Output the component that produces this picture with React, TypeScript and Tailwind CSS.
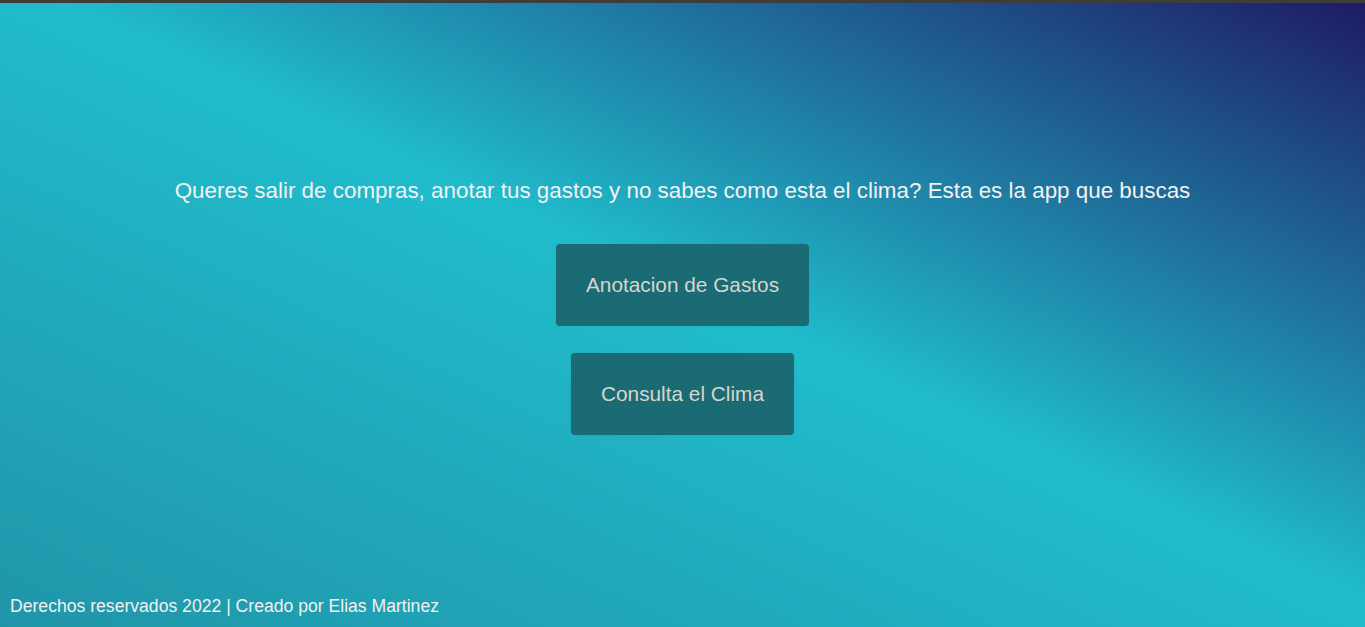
import React from "react";

const links = [
  { label: "Anotacion de Gastos" },
  { label: "Consulta el Clima" },
];

export default function App() {
  return (
    <div className="flex min-h-screen flex-col bg-[linear-gradient(to_top_right,#2095a9_0%,#20bccc_52%,#1e1b63_100%)] font-['Liberation_Sans',Arial,sans-serif]">
      <div className="h-[3px] bg-[#3d3d3d]" />

      <main className="flex flex-col items-center pt-[175px]">
        <p className="text-[22.4px] leading-[25px] text-[#f2f2f2]">
          Queres salir de compras, anotar tus gastos y no sabes como esta el clima? Esta es la app que buscas
        </p>

        <div className="mt-[41px] flex flex-col items-center gap-[27px]">
          {links.map((link) => (
            <button
              key={link.label}
              className="rounded-[4px] bg-[#1a6b73] px-[30px] py-[29px] text-[20.8px] leading-[24px] text-[#d6d6cf] shadow-[0_0_2px_rgba(0,0,0,0.08)]"
            >
              {link.label}
            </button>
          ))}
        </div>
      </main>

      <footer className="mt-auto px-[10px] pb-[11px] text-[17.6px] leading-[20px] text-[#eef2f2]">
        Derechos reservados 2022 | Creado por Elias Martinez
      </footer>
    </div>
  );
}
